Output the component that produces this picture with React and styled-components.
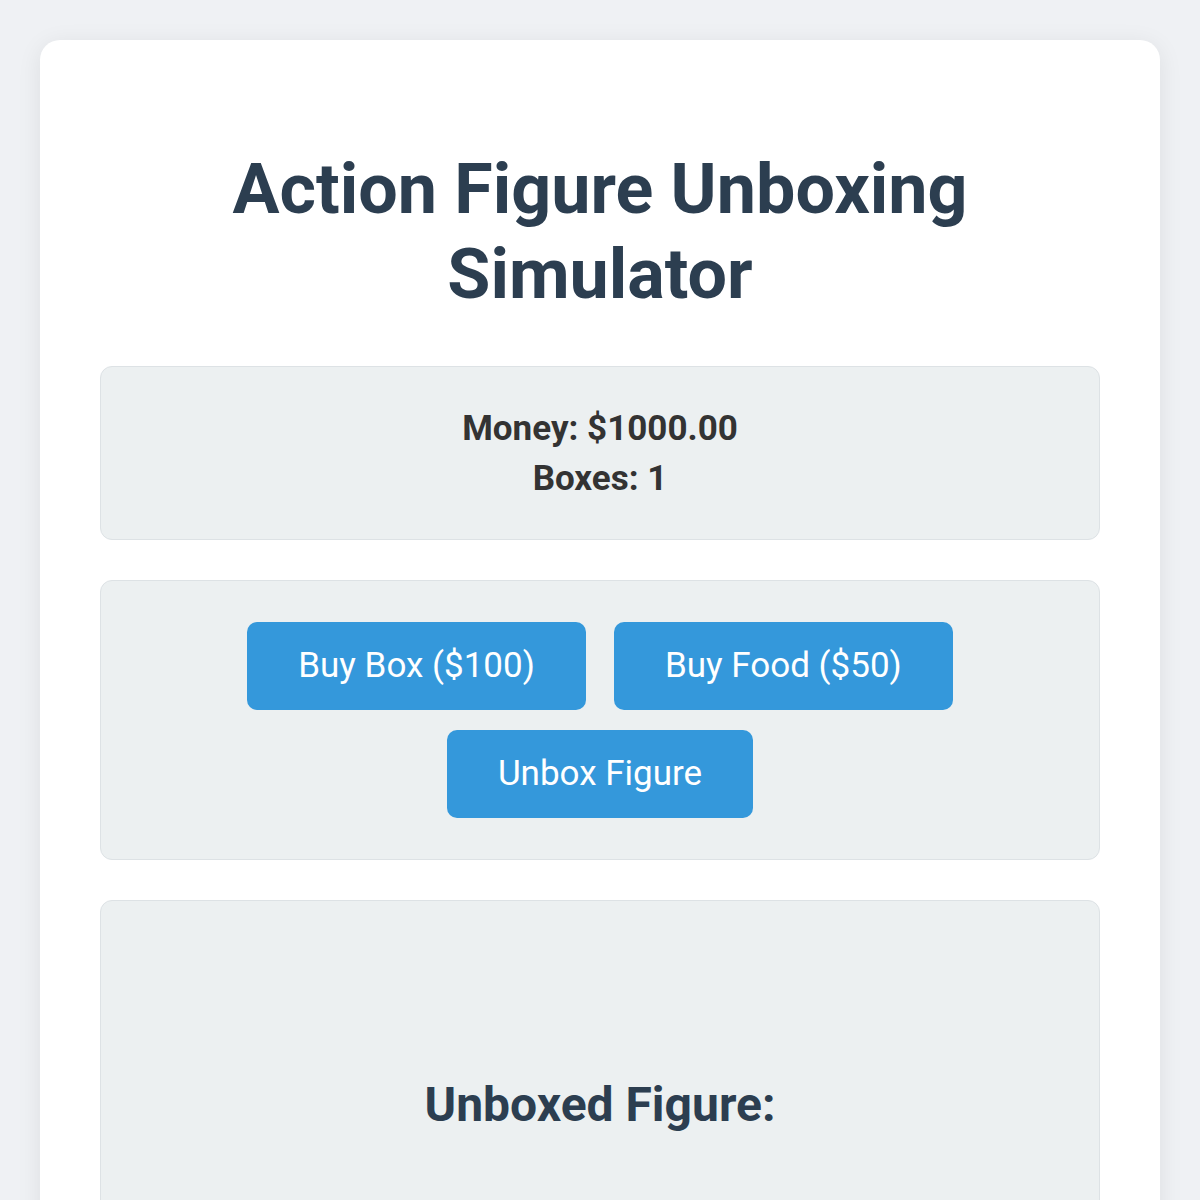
import styled, { createGlobalStyle } from 'styled-components'

const GlobalStyle = createGlobalStyle`
	body {
		margin: 0;
		background: #eff1f4;
		font-family: Roboto, "Liberation Sans", Arial, sans-serif;
	}
`

const App = () => {
	return (
		<>
			<GlobalStyle />
			<Page>
				<Card>
					<Title>Action Figure Unboxing Simulator</Title>
					<Panel>
						<Stat>Money: $1000.00</Stat>
						<Stat>Boxes: 1</Stat>
					</Panel>
					<Panel tight>
						<Actions>
							<Button>Buy Box ($100)</Button>
							<Button>Buy Food ($50)</Button>
							<Button>Unbox Figure</Button>
						</Actions>
					</Panel>
					<FigurePanel>
						<FigureSlot />
						<FigureTitle>Unboxed Figure:</FigureTitle>
						<FigureSlot />
					</FigurePanel>
				</Card>
			</Page>
		</>
	)
}

export default App

const Page = styled.div`
	padding: 40px;
	min-height: 100vh;
	box-sizing: border-box;
`

const Card = styled.main`
	background: #ffffff;
	border-radius: 20px;
	box-shadow: 0 4px 24px rgba(0, 0, 0, 0.08);
	padding: 60px;
	max-width: 1000px;
	margin: 0 auto;
	overflow: hidden;
`

const Title = styled.h1`
	margin: 0;
	padding: 47px 0 49px;
	font-size: 70px;
	font-weight: 700;
	line-height: 85px;
	text-align: center;
	color: #2c3e50;
`

const Panel = styled.section`
	background: #ecf0f1;
	border: 1px solid #dde2e5;
	border-radius: 12px;
	padding: ${(p) => (p.tight ? '31px 40px' : '41px 40px 40px')};
	margin-bottom: 40px;
	text-align: center;
	display: flex;
	flex-direction: column;
	gap: 9px;
`

const Stat = styled.div`
	font-size: 35px;
	line-height: 41px;
	font-weight: 700;
	color: #333333;
`

const Actions = styled.div`
	display: flex;
	flex-wrap: wrap;
	justify-content: center;
	column-gap: 28px;
	row-gap: 20px;
	padding: 10px 0;
`

const Button = styled.button`
	font-family: inherit;
	font-size: 35px;
	line-height: 41px;
	color: #ffffff;
	background: #3498db;
	border: none;
	border-radius: 10px;
	padding: 23px 51px 24px;
	cursor: pointer;
	&:hover {
		background: #2980b9;
	}
`

const FigurePanel = styled.section`
	background: #ecf0f1;
	border: 1px solid #dde2e5;
	border-radius: 12px;
	padding: 40px;
	text-align: center;
`

const FigureSlot = styled.div`
	height: 136px;
`

const FigureTitle = styled.h2`
	margin: 0;
	font-size: 48px;
	line-height: 56px;
	font-weight: 700;
	color: #2c3e50;
`
